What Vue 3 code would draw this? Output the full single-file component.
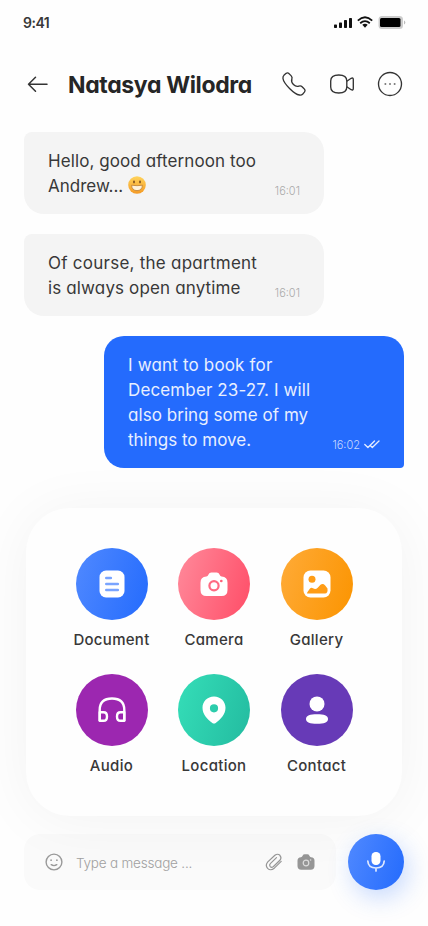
<script setup>
const messages = [
  { lines: [{ text: 'Hello, good afternoon too', w: 'l1' }, { text: 'Andrew...', emoji: true, w: 'l2' }], time: '16:01' },
  { lines: [{ text: 'Of course, the apartment', w: 'l3' }, { text: 'is always open anytime', w: 'l4' }], time: '16:01' },
  {
    mine: true,
    lines: [
      { text: 'I want to book for', w: 'l5' },
      { text: 'December 23-27. I will', w: 'l6' },
      { text: 'also bring some of my', w: 'l7' },
      { text: 'things to move.', w: 'l8' }
    ],
    time: '16:02'
  }
]
const actions = ['Document', 'Camera', 'Gallery', 'Audio', 'Location', 'Contact']
</script>

<template>
  <main class="screen">
    <div class="status">
      <span class="clock">9:41</span>
      <svg class="status-icons" width="72" height="16" viewBox="0 0 72 16">
        <g fill="#111">
          <rect x="0" y="10.500" width="3" height="3.500" rx=".7" />
          <rect x="5" y="8.500" width="3" height="5.500" rx=".7" />
          <rect x="10" y="6" width="3" height="8" rx=".7" />
          <rect x="15" y="4" width="3" height="10" rx=".7" />
        </g>
        <g fill="none" stroke="#111" stroke-width="1.8">
          <path d="M23.8 6.600Q31 0 38.2 6.600" />
          <path d="M26.2 9.200Q31 5 35.800 9.200" />
        </g>
        <path d="M28.300 10.800Q31 8.700 33.700 10.800L31 13.700Z" fill="#111" />
        <rect x="44.500" y="2" width="24.500" height="13" rx="3.500" fill="#ccc" />
        <path d="M70 6.500v4q1.300-.6 1.300-2T70 6.500z" fill="#bbb" />
        <rect x="46" y="4" width="20.500" height="9" rx="1.500" fill="#000" />
      </svg>
    </div>

    <header class="header">
      <svg class="back" width="28" height="28" viewBox="0 0 28 28" fill="none" stroke="#333" stroke-width="1.500" stroke-linecap="round" stroke-linejoin="round">
        <path d="M23 14.300H4.500M11.500 7.300L4.500 14.300L11.500 21.300" />
      </svg>
      <h1 class="name">Natasya Wilodra</h1>
      <div class="tools">
        <svg width="28" height="28" viewBox="0 0 28 28" fill="none" stroke="#333" stroke-width="1.350" stroke-linejoin="round">
          <path d="M13.450 14.550C18.100 19.200 19.150 13.820 22.120 16.780C24.980 19.640 26.620 20.210 23 23.830C22.550 24.190 19.670 28.570 9.550 18.450C-.57 8.330 3.810 5.440 4.170 4.990C7.800 1.360 8.360 3.010 11.220 5.870C14.180 8.840 8.790 9.890 13.450 14.550Z" />
        </svg>
        <svg width="28" height="28" viewBox="0 0 28 28" fill="none" stroke="#333" stroke-width="1.350" stroke-linejoin="round">
          <path d="M10.800 5C16.600 5 18.800 7.200 18.800 11V17C18.800 20.800 16.600 23 10.800 23C5 23 2.700 20.800 2.700 17V11C2.700 7.200 5 5 10.800 5Z" />
          <path d="M18.800 11.300L23.200 8.300Q25.300 7.400 25.300 9.500V18.500Q25.300 20.600 23.200 19.700L18.800 16.700" />
        </svg>
        <svg width="28" height="28" viewBox="0 0 28 28">
          <circle cx="14" cy="14" r="11.500" fill="none" stroke="#333" stroke-width="1.350" />
          <g fill="#777"><circle cx="9.400" cy="14" r="1" /><circle cx="14" cy="14" r="1" /><circle cx="18.600" cy="14" r="1" /></g>
        </svg>
      </div>
    </header>

    <section class="chat">
      <article v-for="(m, i) in messages" :key="i" class="bubble" :class="{ mine: m.mine }">
        <div class="body">
          <p v-for="l in m.lines" :key="l.text" class="line">
            <span :class="l.w">{{ l.text }}</span>
            <svg v-if="l.emoji" class="emoji" width="18" height="18" viewBox="0 0 18 18">
              <defs>
                <linearGradient id="face" x1="0" y1="0" x2="0" y2="1">
                  <stop offset="0" stop-color="#ffd45c" /><stop offset="1" stop-color="#f49a25" />
                </linearGradient>
              </defs>
              <circle cx="9" cy="9" r="8.800" fill="url(#face)" />
              <ellipse cx="6" cy="6" rx="1" ry="1.400" fill="#8a5a22" />
              <ellipse cx="12" cy="6" rx="1" ry="1.400" fill="#8a5a22" />
              <path d="M3.600 9.200Q9 10.200 14.400 9.200Q14 14.600 9 14.600Q4 14.600 3.600 9.200Z" fill="#fff3dc" stroke="#b5782f" stroke-width=".7" />
            </svg>
          </p>
        </div>
        <div class="meta">
          <time>{{ m.time }}</time>
          <svg v-if="m.mine" width="16" height="16" viewBox="0 0 16 16" fill="none" stroke="#e5edff" stroke-width="1.300" stroke-linecap="round" stroke-linejoin="round">
            <path d="M.8 7.500L3.900 10.500L10.500 4M6.300 8.500L8.300 10.500L15 4" />
          </svg>
        </div>
      </article>
    </section>

    <section class="panel">
      <div v-for="a in actions" :key="a" class="action">
        <div class="disc" :class="a.toLowerCase()">
          <svg width="32" height="32" viewBox="0 0 32 32">
            <template v-if="a === 'Document'">
              <rect x="3.500" y="2.500" width="25" height="27" rx="6.500" fill="#fff" />
              <path d="M10.300 10h4.500M10.300 16h11.500M10.300 22h11.500" stroke="#79a4ff" stroke-width="2.600" stroke-linecap="round" />
            </template>
            <template v-else-if="a === 'Camera'">
              <path fill="#fff" d="M8.400 8.600Q9.700 8.400 10.500 6.500Q11.200 4.400 13.400 4.400H18.600Q20.800 4.400 21.500 6.500Q22.300 8.400 23.600 8.600Q29.500 9 29.500 14.700V22Q29.500 28 23.500 28H8.500Q2.500 28 2.500 22V14.700Q2.500 9 8.400 8.600Z" />
              <circle cx="16" cy="17.800" r="4.600" fill="none" stroke="#ff6b82" stroke-width="2.200" />
              <circle cx="23.300" cy="13" r="1.350" fill="#ff6079" />
            </template>
            <template v-else-if="a === 'Gallery'">
              <rect x="2.500" y="2.500" width="27" height="27" rx="7" fill="#fff" />
              <circle cx="11" cy="11.300" r="3.500" fill="#ff9d16" />
              <path fill="#ff9d16" d="M6.500 25.500Q5.400 25.500 6.500 23.900L9 20.500Q10.400 19.200 12 20.300Q14.500 22.200 16.700 19.700L19.500 16.700Q22 15 24.200 17.500L26.500 20.500Q27 25.500 24 25.500Z" />
            </template>
            <g v-else-if="a === 'Audio'" fill="none" stroke="#fff" stroke-width="2.400" stroke-linejoin="round">
              <path d="M3.700 27V16Q3.700 4.500 16 4.500Q28.300 4.500 28.300 16V27" />
              <path d="M3.700 18.300H7.500Q11 18.300 11 22.400Q11 26.800 7.500 26.800H3.700ZM28.300 18.300H24.500Q21 18.300 21 22.400Q21 26.800 24.500 26.800H28.300Z" />
            </g>
            <path v-else-if="a === 'Location'" fill="#fff" fill-rule="evenodd" d="M16 2.500C9.300 2.500 4.500 7.500 4.500 13.800C4.500 20.500 9.400 25.500 14.300 29Q16 30 17.700 29C22.600 25.500 27.500 20.500 27.500 13.800C27.500 7.500 22.700 2.500 16 2.500ZM16 10.200A4.100 4.100 0 1 1 16 18.400A4.100 4.100 0 1 1 16 10.200Z" />
            <template v-else>
              <circle cx="16" cy="9.900" r="7.500" fill="#fff" />
              <path fill="#fff" d="M16 20.300C23 20.300 27 21.500 27 25.100C27 28.600 23 29.800 16 29.800C9 29.800 5 28.600 5 25.100C5 21.500 9 20.300 16 20.300Z" />
            </template>
          </svg>
        </div>
        <span class="label">{{ a }}</span>
      </div>
    </section>

    <footer class="composer">
      <div class="field">
        <svg width="20" height="20" viewBox="0 0 20 20" fill="none" stroke="#999" stroke-width="1.400" stroke-linecap="round">
          <circle cx="10" cy="10" r="7.900" />
          <path d="M7.200 12.700Q10 14.500 12.800 12.700" />
          <path d="M7.100 8v.2M12.900 8v.2" stroke-width="1.700" />
        </svg>
        <span class="placeholder">Type a message ...</span>
        <svg class="clip" width="20" height="20" viewBox="0 0 20 20" fill="none" stroke="#969696" stroke-width="1.200" stroke-linecap="round" stroke-linejoin="round">
          <path d="M17.200 9.300L10.300 16.200Q6.600 19.200 3.600 16.400Q.9 13.300 3.800 9.900L10.900 3.300Q13.600 1.200 15.900 3.300Q18 5.700 15.900 8.300L9.200 14.700Q7.500 15.900 6.200 14.600Q5 13 6.300 11.600L12.500 5.600" />
        </svg>
        <svg width="20" height="20" viewBox="0 0 20 20">
          <path fill="#969696" d="M5 5.200Q6.100 5 6.600 3.700Q7.200 2.300 8.700 2.300H11.300Q12.800 2.300 13.400 3.700Q13.900 5 15 5.200Q18.500 5.400 18.500 8.800V14Q18.500 17.700 14.700 17.700H5.300Q1.500 17.700 1.500 14V8.800Q1.500 5.400 5 5.200Z" />
          <circle cx="10" cy="11" r="2.800" fill="none" stroke="#ddd" stroke-width="1.200" />
          <circle cx="14.600" cy="8" r=".8" fill="#ddd" />
        </svg>
      </div>
      <button class="mic" aria-label="Record">
        <svg width="24" height="24" viewBox="0 0 24 24" fill="none">
          <rect x="7.500" y="2" width="9" height="13" rx="4.200" fill="#fff" />
          <path d="M3.800 11Q4.200 18 12 18Q19.800 18 20.200 11M12 18V21" stroke="#dfe9ff" stroke-width="1.700" stroke-linecap="round" />
        </svg>
      </button>
    </footer>
  </main>
</template>

<style>
body { background: #fefefe; }
</style>

<style scoped>
.screen {
  width: 428px;
  height: 926px;
  overflow: hidden;
  display: flex;
  flex-direction: column;
  background: #fefefe;
  color: #383838;
  font-family: Inter, "Liberation Sans", sans-serif;
  font-feature-settings: "cv11" 1;
}
.status {
  height: 44px;
  flex: none;
  display: flex;
  align-items: center;
  justify-content: space-between;
  padding: 0 22px 0 23px;
}
.clock { font-size: 14px; font-weight: 600; letter-spacing: -0.5px; }
.header {
  height: 80px;
  flex: none;
  display: flex;
  align-items: center;
  padding: 0 24px;
}
.back { flex: none; }
.name { margin: 1px 0 0 16px; font-size: 23px; line-height: 28px; font-weight: 700; letter-spacing: -0.35px; color: #262626; white-space: nowrap; }
.tools { display: flex; gap: 20px; margin-left: auto; margin-right: 0; }
.tools svg { flex: none; }
.chat {
  flex: none;
  display: flex;
  flex-direction: column;
  align-items: flex-start;
  gap: 20px;
  padding: 8px 24px 0;
}
.bubble {
  box-sizing: border-box;
  width: 300px;
  padding: 17px 24px 15px;
  display: flex;
  justify-content: space-between;
  align-items: flex-end;
  background: #f4f4f4;
  border-radius: 8px 20px 20px 20px;
}
.mine {
  align-self: flex-end;
  background: #246bfd;
  color: #e8efff;
  border-radius: 20px 20px 4px 20px;
}
.line { margin: 0; height: 25px; font-size: 17px; line-height: 25px; white-space: nowrap; display: flex; align-items: center; gap: 5px; }
.emoji { margin-bottom: 3px; }
.l1 { letter-spacing: 0.09px; }
.l3 { letter-spacing: 0.25px; }
.l4 { letter-spacing: 0.14px; }
.l5 { letter-spacing: 0.17px; }
.l6 { letter-spacing: 0.13px; }
.l7 { letter-spacing: 0.05px; }
.meta { display: flex; align-items: center; gap: 4px; height: 16px; font-size: 11px; font-weight: 300; color: #aaa; letter-spacing: 0; margin-left: -30px; }
.mine .meta { color: #c7d9ff; }
.panel {
  position: relative;
  z-index: 1;
  flex: none;
  box-sizing: border-box;
  width: 376px;
  height: 308px;
  margin: 40px auto 0;
  padding: 40px 34px;
  display: grid;
  grid-template-columns: repeat(3, 102.500px);
  grid-auto-rows: 102px;
  justify-content: center;
  row-gap: 24px;
  background: #fefefe;
  border-radius: 44px;
  box-shadow: 0 4px 60px rgba(4, 6, 15, 0.05);
}
.action { display: flex; flex-direction: column; align-items: center; gap: 8px; }
.disc { width: 72px; height: 72px; border-radius: 50%; display: flex; align-items: center; justify-content: center; flex: none; }
.document { background: linear-gradient(107deg, #5089ff, #246bfd); }
.camera { background: linear-gradient(107deg, #ff8a9b, #ff4d67); }
.gallery { background: linear-gradient(107deg, #ffab38, #fb9400); }
.audio { background: #9c27b0; }
.location { background: linear-gradient(107deg, #35deb8, #23bba0); }
.contact { background: #673ab7; }
.label { font-size: 15px; line-height: 24px; font-weight: 500; letter-spacing: 0.3px; white-space: nowrap; }
.composer {
  flex: none;
  display: flex;
  gap: 12px;
  padding: 18px 24px 0;
}
.field {
  flex: 1;
  box-sizing: border-box;
  height: 56px;
  padding: 0 20px;
  display: flex;
  align-items: center;
  background: #fafafa;
  border-radius: 16px;
}
.placeholder { margin: 1px 0 0 12px; font-size: 13.500px; letter-spacing: -0.2px; color: #a0a0a0; font-weight: 300; white-space: nowrap; }
.clip { margin-left: auto; margin-right: 12px; }
.mic {
  position: relative;
  z-index: 2;
  width: 56px;
  height: 56px;
  flex: none;
  padding: 0;
  border: 0;
  border-radius: 50%;
  display: flex;
  align-items: center;
  justify-content: center;
  background: linear-gradient(107deg, #5089ff, #246bfd);
  box-shadow: 4px 8px 24px rgba(36, 107, 253, 0.25);
}
</style>
